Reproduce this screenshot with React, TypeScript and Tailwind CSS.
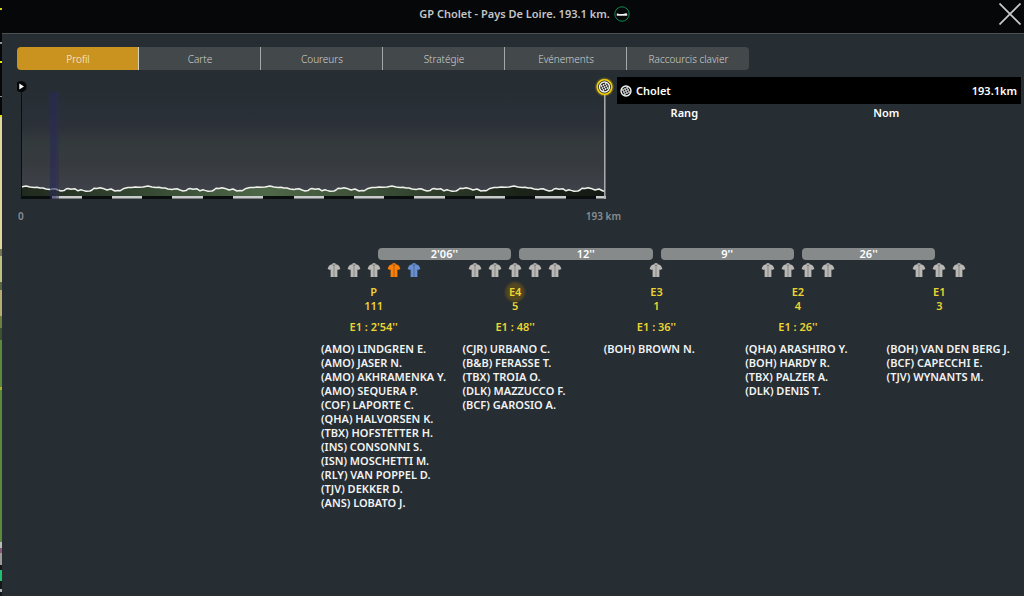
import React from 'react';

interface Group {
  name: string;
  count: number;
  delay?: string;
  active?: boolean;
  jerseys: string[];
  riders: string[];
}

const GREY = '#b9b8b4';

const tabs = ['Profil', 'Carte', 'Coureurs', 'Stratégie', 'Evénements', 'Raccourcis clavier'];

const gaps = ["2'06''", "12''", "9''", "26''"];

const groups: Group[] = [
  {
    name: 'P',
    count: 111,
    delay: "E1 : 2'54''",
    jerseys: [GREY, GREY, GREY, '#fb7e06', '#6690d0'],
    riders: [
      '(AMO) LINDGREN E.',
      '(AMO) JASER N.',
      '(AMO) AKHRAMENKA Y.',
      '(AMO) SEQUERA P.',
      '(COF) LAPORTE C.',
      '(QHA) HALVORSEN K.',
      '(TBX) HOFSTETTER H.',
      '(INS) CONSONNI S.',
      '(ISN) MOSCHETTI M.',
      '(RLY) VAN POPPEL D.',
      '(TJV) DEKKER D.',
      '(ANS) LOBATO J.',
    ],
  },
  {
    name: 'E4',
    count: 5,
    delay: "E1 : 48''",
    active: true,
    jerseys: [GREY, GREY, GREY, GREY, GREY],
    riders: [
      '(CJR) URBANO C.',
      '(B&B) FERASSE T.',
      '(TBX) TROIA O.',
      '(DLK) MAZZUCCO F.',
      '(BCF) GAROSIO A.',
    ],
  },
  {
    name: 'E3',
    count: 1,
    delay: "E1 : 36''",
    jerseys: [GREY],
    riders: ['(BOH) BROWN N.'],
  },
  {
    name: 'E2',
    count: 4,
    delay: "E1 : 26''",
    jerseys: [GREY, GREY, GREY, GREY],
    riders: ['(QHA) ARASHIRO Y.', '(BOH) HARDY R.', '(TBX) PALZER A.', '(DLK) DENIS T.'],
  },
  {
    name: 'E1',
    count: 3,
    jerseys: [GREY, GREY, GREY],
    riders: ['(BOH) VAN DEN BERG J.', '(BCF) CAPECCHI E.', '(TJV) WYNANTS M.'],
  },
];

// One lap of the circuit: [distance, height], repeated until the finish
const LAP_LENGTH = 122;
const lap: [number, number][] = [
  [0, 110], [5, 109], [9, 110], [13, 110.4], [16, 110.2], [19, 111], [22, 111], [25, 112], [29, 112.6],
  [31, 112], [34, 111.8], [37, 113], [40, 114], [43, 113.6], [45, 112], [47, 111.6], [50, 112.2],
  [54, 111.8], [57, 113.8], [60, 112.8], [62, 113.4], [65, 114.2], [69, 114], [71, 113], [73, 111.2],
  [76, 111.4], [79, 110.8], [82, 111.4], [86, 113], [90, 112], [94, 114], [97, 113.4], [99, 113.8],
  [103, 111.4], [107, 110.4], [111, 110.6], [114, 110], [118, 110.2],
];

const START = 4;
const FINISH = 588;
const BASE = 119;

const profile: [number, number][] = [];
for (let i = 0; i < 5; i++) {
  lap.forEach(([x, y]) => {
    const px = START + i * LAP_LENGTH + x;
    if (px < FINISH) profile.push([px, y]);
  });
}
profile.push([FINISH, 114]);

const line = profile.map(([x, y]) => `${x},${y}`).join(' ');

// White segments of the distance scale
const scale: [number, number][] = [
  [35, 30], [95, 30], [155, 31], [216, 30], [277, 30], [337, 30], [397, 31], [458, 30], [518, 31], [579, 10],
];

const FlagDisc: React.FC = () => (
  <g>
    <circle r="5.7" fill="#f4f4f4" />
    <circle r="4.3" fill="#1c1f21" />
    <g fill="#f4f4f4" transform="rotate(20)">
      <path d="M-.8-.8h1.6v1.6h-1.6zM-.8-4h1.6v1.6h-1.6zM-.8 2.4h1.6v1.6h-1.6zM-4-.8h1.6v1.6h-1.6zM2.4-.8h1.6v1.6h-1.6z" />
      <path d="M-2.4-2.4h1.6v1.6h-1.6zM.8-2.4h1.6v1.6h-1.6zM-2.4.8h1.6v1.6h-1.6zM.8.8h1.6v1.6h-1.6z" />
    </g>
  </g>
);

const Jersey: React.FC<{ color: string }> = ({ color }) => (
  <svg viewBox="0 0 14 14" className="w-3.5 h-3.5" aria-hidden="true">
    <path
      d="M5.4 0.4Q7-.2 8.6 0.4L9 1.2L11 1.9Q12 2.4 12.4 3.5L13.4 6.1L10.9 7L10.4 6.2V14H3.6V6.2L3.1 7L0.6 6.1L1.6 3.5Q2 2.4 3 1.9L5 1.2Z"
      fill={color}
    />
    <path d="M7 1.8V14" stroke="#262d33" strokeOpacity=".45" strokeWidth=".8" />
    <path d="M5.2 1.3Q6.8 1.6 7 3Q7.2 1.6 8.8 1.3" fill="none" stroke="#262d33" strokeOpacity=".4" strokeWidth=".6" />
  </svg>
);

// Sliver of the race view that stays visible beside the panel
const RaceView: React.FC = () => (
  <svg viewBox="0 0 2 596" preserveAspectRatio="none" className="w-full h-full" aria-hidden="true">
    <rect width="2" height="596" fill="#060709" />
    <rect y="8" width="2" height="2" fill="#d6d013" />
    <rect y="42" width="2" height="2" fill="#909496" />
    <rect y="61" width="2" height="2" fill="#eee600" />
    <rect y="96" width="2" height="1" fill="#909496" />
    <rect y="115" width="2" height="2" fill="#e6df00" />
    <rect y="117" width="2" height="132" fill="#dfd79b" />
    <rect y="249" width="2" height="7" fill="#77765a" />
    <rect y="256" width="2" height="26" fill="#c0bf82" />
    <rect y="282" width="2" height="8" fill="#5b6745" />
    <rect y="290" width="2" height="26" fill="#b9ac70" />
    <rect y="316" width="2" height="12" fill="#6f7f42" />
    <rect y="328" width="2" height="12" fill="#3d532f" />
    <rect y="340" width="2" height="202" fill="#5b8a3d" />
    <rect y="387" width="2" height="3" fill="#a7b42b" />
    <rect y="542" width="2" height="6" fill="#b9bcb6" />
    <rect y="548" width="2" height="5" fill="#8b5877" />
    <rect y="553" width="2" height="12" fill="#9c9b97" />
    <rect y="565" width="2" height="31" fill="#15181a" />
    <rect y="570" width="2" height="11" fill="#20c070" />
    <rect y="589" width="2" height="3" fill="#b4b4b4" />
  </svg>
);

const StageProfile: React.FC = () => (
  <svg viewBox="0 0 600 126" className="block w-full" role="img" aria-label="Profil">
    <defs>
      <linearGradient id="sky" x1="0" y1="0" x2="0" y2="1">
        <stop offset="0" stopColor="#262d33" />
        <stop offset=".35" stopColor="#2c3139" />
        <stop offset=".5" stopColor="#333a3c" />
        <stop offset=".7" stopColor="#373b3f" />
        <stop offset="1" stopColor="#40434b" />
      </linearGradient>
      <linearGradient id="ground" x1="0" y1="0" x2="1" y2="0">
        <stop offset="0" stopColor="#20291d" />
        <stop offset=".22" stopColor="#364a33" />
        <stop offset=".42" stopColor="#4f6848" />
        <stop offset=".65" stopColor="#364832" />
        <stop offset=".85" stopColor="#1c241a" />
        <stop offset="1" stopColor="#141a13" />
      </linearGradient>
      <radialGradient id="glow">
        <stop offset=".7" stopColor="#e8c400" stopOpacity=".6" />
        <stop offset="1" stopColor="#e8c400" stopOpacity="0" />
      </radialGradient>
    </defs>
    <rect x="4" y="12" width="584" height="107" fill="url(#sky)" />
    <polygon points={`${START},${BASE} ${line} ${FINISH},${BASE}`} fill="url(#ground)" />
    <polyline points={line} fill="none" stroke="#f0f2ee" strokeWidth="1.5" strokeLinejoin="round" />
    <rect x="4" y="119" width="584" height="3" fill="#0b0e0f" />
    {scale.map(([x, w]) => (
      <rect key={x} x={x} y="119" width={w} height="2.6" fill="#c9cacb" />
    ))}
    <rect x="33" y="15" width="6" height="107" fill="#282a58" fillOpacity=".6" />
    <rect x="39" y="15" width="3" height="107" fill="#2d2c50" fillOpacity=".5" />
    <path d="M4.5 10V122" stroke="#0b0e0f" />
    <path d="M587.8 16V122" stroke="#b4b6b8" strokeWidth="1.4" />
    <circle cx="4" cy="9.5" r="5.6" fill="#050607" />
    <path d="M2.3 6.6L7 9.5L2.3 12.4Z" fill="#fff" />
    <circle cx="587.5" cy="10" r="10" fill="url(#glow)" />
    <circle cx="587.5" cy="10" r="7.2" fill="#1d2021" stroke="#f3cf0c" strokeWidth="1.6" />
    <g transform="translate(587.5 10)">
      <FlagDisc />
    </g>
  </svg>
);

const App: React.FC = () => {
  return (
    <div className="min-h-screen flex bg-[#262d33] text-white font-['Noto_Sans','Open_Sans',sans-serif] text-[11px] leading-[14px]">
      <div className="w-[2px] shrink-0 relative">
        <div className="absolute inset-0">
          <RaceView />
        </div>
      </div>

      <div className="flex-1 min-w-0">
        {/* Title bar */}
        <header className="h-[34px] bg-[#060709] border-b border-[#4b5153] flex items-start">
          <div className="flex-1 pl-12 pt-1.5 flex items-center justify-center gap-1">
            <h1 className="font-semibold text-[#c4c5c6]">GP Cholet - Pays De Loire. 193.1 km.</h1>
            <svg viewBox="0 0 16 16" className="w-4 h-4" aria-hidden="true">
              <circle cx="8" cy="8" r="7.2" fill="none" stroke="#0e8a50" strokeWidth="1" />
              <path d="M2.8 7.6Q4 7.2 5.2 7.9Q8 8.2 10 7.7Q12 6.8 13.2 7.6V9.8H2.8Z" fill="#f0f0f0" />
            </svg>
          </div>
          <button aria-label="Fermer" className="mt-[3px] mr-[3px]">
            <svg viewBox="0 0 22 22" className="w-[22px] h-[22px]" aria-hidden="true">
              <path d="M0.5 0.5L21.5 21.5M21.5 0.5L0.5 21.5" stroke="#c9cacb" strokeWidth="1.7" />
            </svg>
          </button>
        </header>

        <nav className="mt-[13px] ml-[15px] grid grid-cols-6 w-[72%] max-w-[732px] rounded overflow-hidden">
          {tabs.map((tab, i) => (
            <button
              key={tab}
              className={
                i === 0
                  ? 'h-[23px] pl-px text-[10px] font-light bg-[#ca931f] text-[#fbf4e4] border-r border-[#d5d0c4]'
                  : 'h-[23px] pl-px text-[10px] font-light bg-[#43494b] text-[#cfd1d2] border-r border-[#a5a8a9] last:border-r-0'
              }
            >
              {tab}
            </button>
          ))}
        </nav>

        <section className="mt-[7px] pl-[15px] pr-[3px] grid grid-cols-[600fr_404fr]">
          <div>
            <StageProfile />
            <div className="flex justify-between pt-1.5 pl-px -mr-1 text-[10px] font-semibold text-[#8a8e91]">
              <span>0</span>
              <span>193 km</span>
            </div>
          </div>

          <div>
            <div className="h-[27px] bg-black flex items-center gap-1 pl-[3px] pr-1 font-semibold">
              <svg viewBox="-6 -6 12 12" className="w-3 h-3" aria-hidden="true">
                <FlagDisc />
              </svg>
              <span className="flex-1">Cholet</span>
              <span>193.1km</span>
            </div>
            <table className="w-full table-fixed mt-0.5">
              <thead>
                <tr>
                  <th className="w-1/3 font-semibold">Rang</th>
                  <th className="font-semibold">Nom</th>
                </tr>
              </thead>
            </table>
          </div>
        </section>

        {/* Race situation */}
        <section className="mt-[25px] pl-[301px] pr-[14px] pb-6 font-semibold">
          <div className="w-4/5 mx-auto grid grid-cols-4">
            {gaps.map((gap) => (
              <div key={gap} className="px-1">
                <div className="h-3 leading-3 rounded bg-[#868a8b] text-center">{gap}</div>
              </div>
            ))}
          </div>

          <div className="mt-[3px] grid grid-cols-5">
            {groups.map((group) => (
              <div key={group.name}>
                <div className="flex justify-center gap-1.5">
                  {group.jerseys.map((color, i) => (
                    <Jersey key={i} color={color} />
                  ))}
                </div>
                <div className="mt-2 text-center text-[#ecd532]">
                  <div className="relative">
                    {group.active && (
                      <span className="absolute left-1/2 top-1/2 w-5 h-5 -translate-x-1/2 -translate-y-1/2 rounded-full bg-[#534720] blur-[1px]" />
                    )}
                    <h2 className="relative">{group.name}</h2>
                  </div>
                  <p>{group.count}</p>
                  <p className="mt-[7px] h-3.5">{group.delay}</p>
                </div>
                <ul className="mt-2 pl-[18px] whitespace-nowrap text-[#f2f3f3]">
                  {group.riders.map((rider) => (
                    <li key={rider}>{rider}</li>
                  ))}
                </ul>
              </div>
            ))}
          </div>
        </section>
      </div>
    </div>
  );
};

export default App;
